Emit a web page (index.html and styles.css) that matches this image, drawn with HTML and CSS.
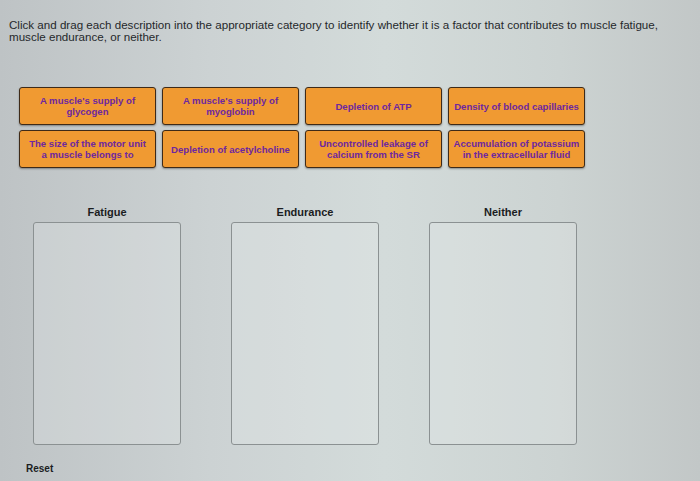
FILE: index.html
```html
<!DOCTYPE html>
<html lang="en">
<head>
    <meta charset="UTF-8">
    <meta name="viewport" content="width=device-width, initial-scale=1.0">
    <title>Muscle Fatigue Sorting</title>
    <link rel="stylesheet" href="styles.css">
</head>
<body>

<p class="prompt">Click and drag each description into the appropriate category to identify whether it is a factor that contributes to muscle fatigue, muscle endurance, or neither.</p>

<!-- Draggable description tiles -->
<div class="tiles">
    <div class="tile">A muscle's supply of<br>glycogen</div>
    <div class="tile">A muscle's supply of<br>myoglobin</div>
    <div class="tile">Depletion of ATP</div>
    <div class="tile">Density of blood capillaries</div>
    <div class="tile">The size of the motor unit<br>a muscle belongs to</div>
    <div class="tile">Depletion of acetylcholine</div>
    <div class="tile">Uncontrolled leakage of<br>calcium from the SR</div>
    <div class="tile">Accumulation of potassium<br>in the extracellular fluid</div>
</div>

<!-- Drop targets -->
<div class="bins">
    <div class="bin">
        <div class="bin-title">Fatigue</div>
        <div class="bin-box"></div>
    </div>
    <div class="bin">
        <div class="bin-title">Endurance</div>
        <div class="bin-box"></div>
    </div>
    <div class="bin">
        <div class="bin-title">Neither</div>
        <div class="bin-box"></div>
    </div>
</div>

<div class="reset">Reset</div>

</body>
</html>
```

FILE: styles.css
```css
/* Page */
body {
    margin: 0;
    height: 481px;
    font-family: "Liberation Sans", Arial, sans-serif;
    color: #1e2124;
    background: linear-gradient(90deg, #bec3c5 0%, #ccd2d3 30%, #d3dbda 55%, #ccd3d2 80%, #c2c7c7 100%);
    overflow: hidden;
}

/* Instructions */
.prompt {
    margin: 0;
    width: 670px;
    padding: 19px 0 0 9px;
    font-size: 11.6px;
    line-height: 11.5px;
    color: #25282b;
}

/* Tile grid */
.tiles {
    display: grid;
    grid-template-columns: repeat(4, 137px);
    grid-auto-rows: 38px;
    column-gap: 6px;
    row-gap: 5px;
    padding: 45px 0 0 19px;
}

.tile {
    display: flex;
    align-items: center;
    justify-content: center;
    text-align: center;
    padding: 0 2px;
    background-color: #f09a32;
    border: 1.5px solid #3e2a18;
    border-radius: 3px;
    box-shadow: 0 1px 2px rgba(0, 0, 0, 0.35);
    color: #6d27a0;
    font-size: 9.6px;
    font-weight: bold;
    line-height: 11px;
    cursor: grab;
}

/* Category columns */
.bins {
    display: flex;
    gap: 50px;
    padding: 38px 0 0 33px;
}

.bin {
    width: 148px;
}

.bin-title {
    text-align: center;
    font-size: 11px;
    font-weight: bold;
    height: 16px;
    color: #1b1d1f;
}

.bin-box {
    height: 221px;
    border: 1px solid #8b9192;
    border-radius: 3px;
    background-color: rgba(235, 240, 240, 0.25);
}

/* Reset link */
.reset {
    padding: 18px 0 0 26px;
    font-size: 10px;
    font-weight: bold;
    color: #1b1d1f;
    cursor: pointer;
}
```
